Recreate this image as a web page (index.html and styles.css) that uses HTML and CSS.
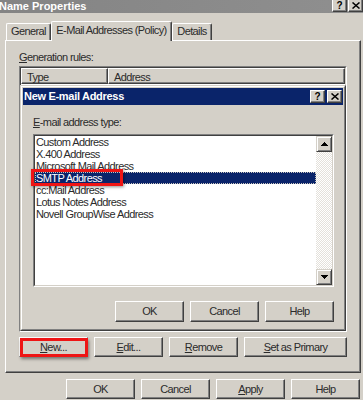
FILE: index.html
```html
<!DOCTYPE html>
<html lang="en">
<head>
  <meta charset="UTF-8">
  <title>Name Properties</title>
  <link rel="stylesheet" href="styles.css">
</head>
<body>
  <div class="caption">
    <span class="caption-text">Name Properties</span>
    <div class="caption-buttons">
      <span class="cap-btn">?</span>
      <span class="cap-btn">
        <svg width="8" height="7" viewBox="0 0 8 7"><path d="M0.5 0.5 L7.5 6.5 M7.5 0.5 L0.5 6.5" stroke="#000" stroke-width="1.5" fill="none"/></svg>
      </span>
    </div>
  </div>

  <div class="tabs">
    <div class="tab tab-general">General</div>
    <div class="tab tab-active">E-Mail Addresses (Policy)</div>
    <div class="tab tab-details">Details</div>
  </div>

  <div class="panel">
    <div class="label"><u>G</u>eneration rules:</div>

    <div class="listview">
      <div class="listview-inner">
        <div class="lv-header">
          <div class="lv-col lv-type">Type</div>
          <div class="lv-col lv-address">Address</div>
        </div>

        <div class="dialog">
          <div class="dialog-frame">
            <div class="dlg-title">
              <span class="dlg-title-text">New E-mail Address</span>
              <div class="dlg-title-buttons">
                <span class="cap-btn small">?</span>
                <span class="cap-btn small">
                  <svg width="8" height="7" viewBox="0 0 8 7"><path d="M0.5 0.5 L7.5 6.5 M7.5 0.5 L0.5 6.5" stroke="#000" stroke-width="1.5" fill="none"/></svg>
                </span>
              </div>
            </div>

            <div class="dlg-body">
              <div class="label"><u>E</u>-mail address type:</div>
              <div class="listbox">
                <div class="listbox-inner">
                  <ul class="items">
                    <li>Custom Address</li>
                    <li>X.400 Address</li>
                    <li>Microsoft Mail Address</li>
                    <li class="selected">SMTP Address</li>
                    <li>cc:Mail Address</li>
                    <li>Lotus Notes Address</li>
                    <li>Novell GroupWise Address</li>
                  </ul>
                  <div class="scrollbar">
                    <span class="sb-btn">
                      <svg width="7" height="4" viewBox="0 0 7 4"><path d="M3 0h1v1h1v1h1v1h1v1H0V3h1V2h1V1h1z" fill="#000"/></svg>
                    </span>
                    <span class="sb-btn">
                      <svg width="7" height="4" viewBox="0 0 7 4"><path d="M0 0h7v1H6v1H5v1H4v1H3V3H2V2H1V1H0z" fill="#000"/></svg>
                    </span>
                  </div>
                </div>
              </div>
              <div class="dlg-buttons">
                <button class="btn tall">OK</button>
                <button class="btn tall">Cancel</button>
                <button class="btn tall">Help</button>
              </div>
            </div>
          </div>
        </div>
      </div>
    </div>

    <div class="rule-buttons">
      <button class="btn marked"><span><u>N</u>ew...</span></button>
      <button class="btn"><span><u>E</u>dit...</span></button>
      <button class="btn"><span><u>R</u>emove</span></button>
      <button class="btn wide"><span><u>S</u>et as Primary</span></button>
    </div>
  </div>

  <div class="main-buttons">
    <button class="btn">OK</button>
    <button class="btn">Cancel</button>
    <button class="btn"><span><u>A</u>pply</span></button>
    <button class="btn">Help</button>
  </div>
</body>
</html>
```

FILE: styles.css
```css
body {
  margin: 0;
  width: 363px;
  height: 400px;
  overflow: hidden;
  background: #d4d0c8;
  font-family: "Liberation Sans", Arial, sans-serif;
  font-size: 11px;
  letter-spacing: -0.6px;
  color: #2b2b2b;
}

u {
  text-decoration-thickness: 1px;
  text-underline-offset: 1px;
}

/* outer window caption (inactive) */
.caption {
  height: 13px;
  display: flex;
  justify-content: space-between;
  background: linear-gradient(to right, #848484, #8f8f8f);
}

.caption-text {
  color: #fff;
  font-weight: bold;
  letter-spacing: 0;
  line-height: 12px;
  margin-left: -1px;
}

.caption-buttons {
  display: flex;
  gap: 1px;
}

.cap-btn {
  box-sizing: border-box;
  width: 15px;
  height: 12px;
  background: #d4d0c8;
  border-left: 1px solid #fff;
  border-right: 1px solid #404040;
  border-bottom: 1px solid #404040;
  box-shadow: inset -1px -1px #808080;
  display: flex;
  align-items: center;
  justify-content: center;
  font-weight: bold;
  font-size: 10px;
  letter-spacing: 0;
  color: #000;
}

.cap-btn.small {
  height: 13px;
  border-top: 1px solid #fff;
}

/* tabs */
.tabs {
  display: flex;
  align-items: flex-end;
  margin-top: 8px;
  padding-left: 6px;
}

.tab {
  box-sizing: border-box;
  height: 17px;
  border: 1px solid;
  border-bottom: none;
  border-color: #fff #404040 #fff #fff;
  border-radius: 2px 2px 0 0;
  box-shadow: inset -1px 0 #808080;
  padding-top: 1px;
  line-height: 13px;
  text-align: center;
}

.tab-general {
  width: 45px;
}

.tab-details {
  width: 40px;
}

.tab-active {
  width: 121px;
  height: 20px;
  padding-top: 2px;
  margin-bottom: -1px;
  background: #d4d0c8;
  position: relative;
  z-index: 1;
}

/* tab page */
.panel {
  box-sizing: border-box;
  margin-left: 5px;
  width: 356px;
  height: 333px;
  border: 1px solid;
  border-color: #fff #404040 #404040 #fff;
  box-shadow: inset -1px -1px #808080;
  padding: 10px 0 0 13px;
}

.label {
  line-height: 13px;
  height: 13px;
  margin-bottom: 2px;
}

.listview {
  box-sizing: border-box;
  width: 328px;
  height: 266px;
  border: 1px solid;
  border-color: #808080 #fff #fff #808080;
}

.listview-inner {
  box-sizing: border-box;
  height: 100%;
  border: 1px solid;
  border-color: #404040 #d4d0c8 #d4d0c8 #404040;
  background: #fff;
  display: flex;
  flex-direction: column;
}

.lv-header {
  display: flex;
  height: 16px;
}

.lv-col {
  box-sizing: border-box;
  height: 16px;
  border: 1px solid;
  border-color: #fff #404040 #404040 #fff;
  box-shadow: inset -1px -1px #808080;
  background: #d4d0c8;
  padding: 2px 0 0 5px;
  line-height: 13px;
}

.lv-type {
  width: 87px;
}

.lv-address {
  flex: 1;
}

/* nested dialog */
.dialog {
  flex: 1;
  display: flex;
  margin: 1px -1px -1px -1px;
  border: 1px solid;
  border-color: #d4d0c8 #404040 #404040 #d4d0c8;
}

.dialog-frame {
  flex: 1;
  display: flex;
  flex-direction: column;
  border: 1px solid;
  border-color: #fff #808080 #808080 #fff;
  background: #d4d0c8;
  padding: 1px;
}

.dlg-title {
  height: 17px;
  background: #0a246a;
  display: flex;
  align-items: center;
  justify-content: space-between;
  padding: 0 1px 0 1px;
}

.dlg-title-text {
  color: #fff;
  font-weight: bold;
  letter-spacing: -0.3px;
  line-height: 13px;
}

.dlg-title-buttons {
  display: flex;
  gap: 2px;
}

.dlg-body {
  padding: 11px 9px 0 10px;
}

.dlg-body .label {
  margin-bottom: 5px;
}

.listbox {
  box-sizing: border-box;
  height: 153px;
  border: 1px solid;
  border-color: #808080 #fff #fff #808080;
}

.listbox-inner {
  box-sizing: border-box;
  height: 100%;
  border: 1px solid;
  border-color: #404040 #d4d0c8 #d4d0c8 #404040;
  background: #fff;
  display: flex;
}

.items {
  flex: 1;
  list-style: none;
  margin: 0;
  padding: 0;
}

.items li {
  height: 12px;
  line-height: 12px;
  padding-left: 1px;
  white-space: nowrap;
}

.items li.selected {
  background: #0a246a;
  color: #fff;
  outline: 1px dotted #c8c4bc;
  outline-offset: -1px;
  position: relative;
}

/* red marker drawn over the screenshot */
.items li.selected::after {
  content: "";
  position: absolute;
  left: -4px;
  top: -3px;
  width: 92px;
  height: 17px;
  box-sizing: border-box;
  border: 3px solid #ee1515;
  box-shadow: 1px 1px 3px rgba(0, 0, 0, 0.45);
}

.scrollbar {
  width: 16px;
  display: flex;
  flex-direction: column;
  justify-content: space-between;
  background-color: #fff;
  background-image: conic-gradient(#e4e1db 25%, #fff 0 50%, #e4e1db 0 75%, #fff 0);
  background-size: 2px 2px;
}

.sb-btn {
  box-sizing: border-box;
  width: 16px;
  height: 16px;
  background: #d4d0c8;
  border: 1px solid;
  border-color: #d4d0c8 #404040 #404040 #d4d0c8;
  box-shadow: inset 1px 1px #fff, inset -1px -1px #808080;
  display: flex;
  align-items: center;
  justify-content: center;
}

.dlg-buttons {
  display: flex;
  justify-content: flex-end;
  gap: 6px;
  margin-top: 14px;
}

/* push buttons */
.btn {
  box-sizing: border-box;
  width: 69px;
  height: 20px;
  margin: 0;
  padding: 0;
  background: #d4d0c8;
  border: 1px solid;
  border-color: #fff #404040 #404040 #fff;
  box-shadow: inset -1px -1px #808080;
  font: inherit;
  letter-spacing: inherit;
  color: #2b2b2b;
  line-height: 13px;
  display: flex;
  align-items: center;
  justify-content: center;
}

.btn.tall {
  height: 21px;
}

.btn.wide {
  width: 103px;
}

.btn.marked {
  position: relative;
}

.btn.marked::after {
  content: "";
  position: absolute;
  left: 0;
  top: 0;
  right: -1px;
  bottom: -1px;
  border: 3px solid #ee1515;
  box-shadow: 1px 2px 3px rgba(0, 0, 0, 0.45);
}

.rule-buttons {
  display: flex;
  gap: 6px;
  margin-top: 5px;
}

.main-buttons {
  display: flex;
  justify-content: flex-end;
  gap: 6px;
  margin-top: 6px;
  padding-right: 3px;
}
```
